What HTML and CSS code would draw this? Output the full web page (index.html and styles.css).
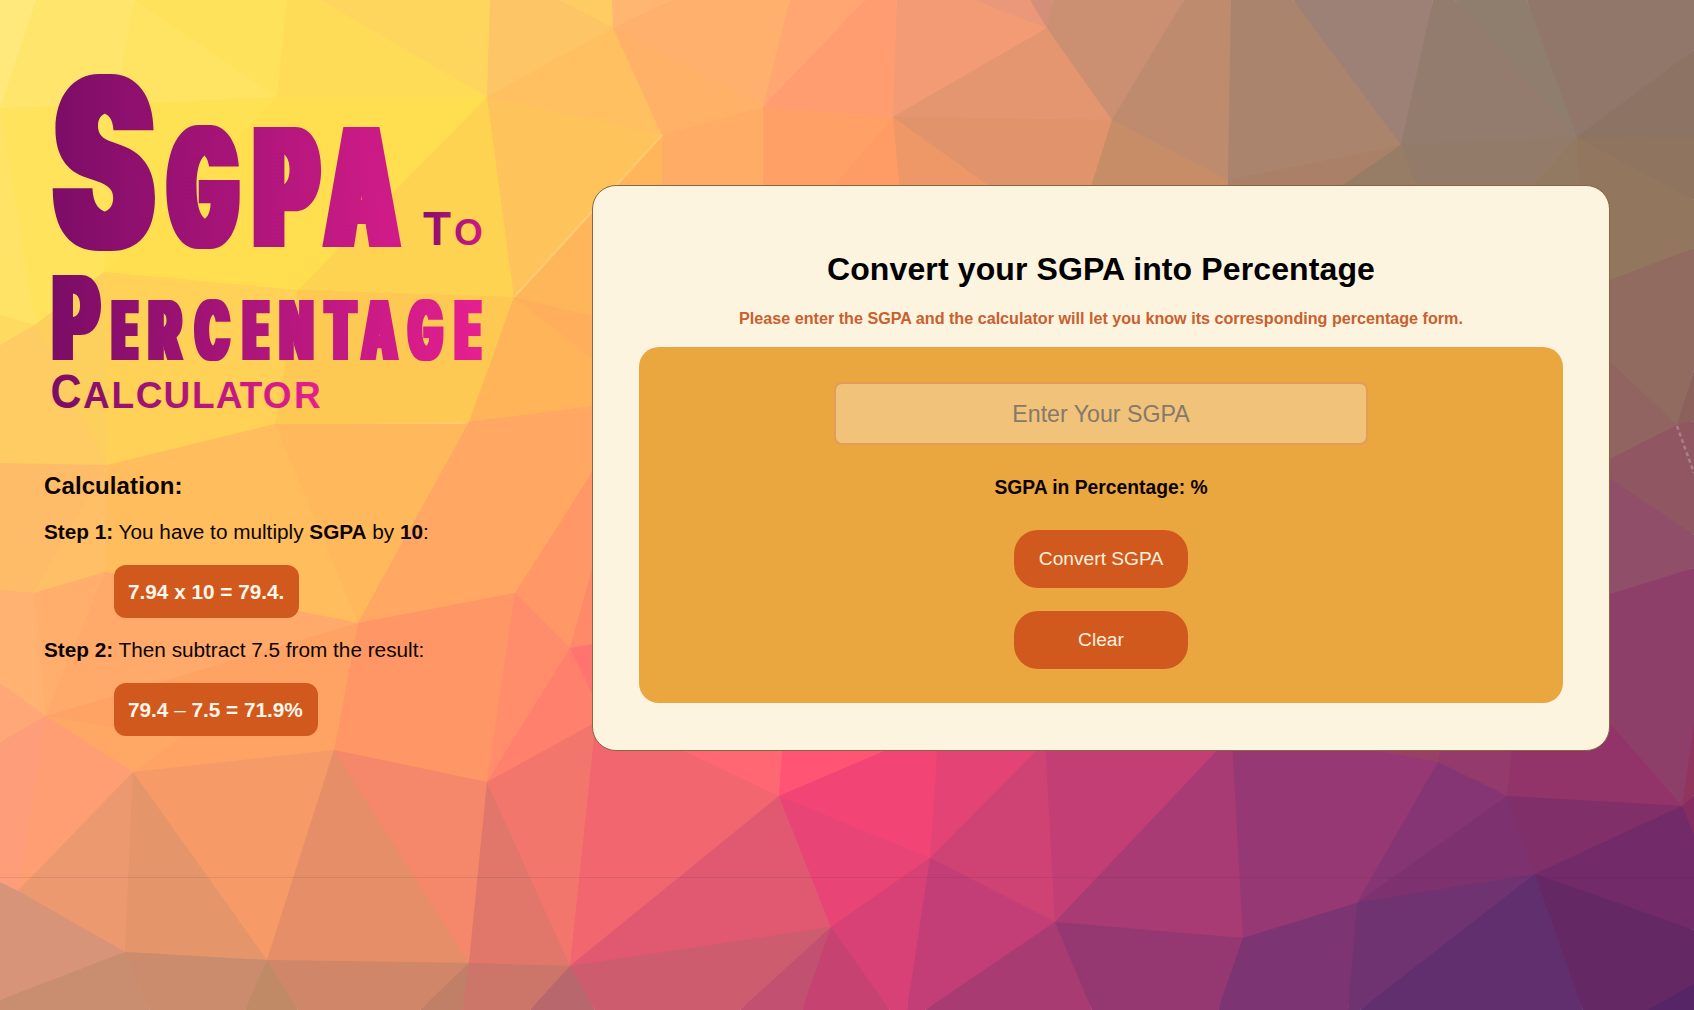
FILE: index.html
```html
<!DOCTYPE html>
<html lang="en">
<head>
<meta charset="utf-8">
<title>SGPA To Percentage Calculator</title>
<link rel="stylesheet" href="styles.css">
</head>
<body>
<svg class="mesh" viewBox="0 0 1694 1010" preserveAspectRatio="none" aria-hidden="true">
  <defs>
    <filter id="spread" filterUnits="userSpaceOnUse" x="-20" y="-20" width="1734" height="1050" color-interpolation-filters="sRGB"><feGaussianBlur stdDeviation="4"/></filter>
  </defs>
  <!-- soft copy underneath closes the hairline gaps between facets -->
  <use href="#facets" filter="url(#spread)"/>
  <g id="facets">
  <!-- upper left -->
  <path d="M0 0H36L0 130z" fill="#ffe97c"/>
  <path d="M36 0H134L115 105 0 108z" fill="#ffe56c"/>
  <path d="M134 0 277 97 115 105z" fill="#ffe363"/>
  <path d="M134 0H287L277 97z" fill="#ffe25c"/>
  <path d="M287 0H320L487 97H277z" fill="#ffdc58"/>
  <path d="M320 0H490L487 97z" fill="#fed65e"/>
  <path d="M490 0H560L613 28 487 97z" fill="#fec566"/>
  <path d="M560 0H612L613 28z" fill="#ffcb63"/>
  <path d="M0 108 115 105 104 272 35 325 0 315z" fill="#ffe35d"/>
  <path d="M0 108 35 325 0 315z" fill="#ffe367"/>
  <path d="M115 105 277 97 104 272z" fill="#ffe253"/>
  <path d="M277 97H487L298 290 104 272z" fill="#ffdf4f"/>
  <path d="M487 97 514 297 298 290z" fill="#ffd352"/>
  <path d="M104 272 298 290 275 424 107 465z" fill="#ffd156"/>
  <path d="M35 325 104 272 107 465z" fill="#fdcf5c"/>
  <path d="M0 315 35 325 0 345z" fill="#ffda60"/>
  <path d="M0 345 35 325 107 465H0z" fill="#ffcb63"/>
  <path d="M298 290 514 297 469 422 275 424z" fill="#fec952"/>
  <path d="M487 97 613 28 662 135 514 297z" fill="#ffc35c"/>
  <path d="M487 97 613 28 662 135z" fill="#ffc061"/>
  <path d="M0 463 107 465 34 593 0 590z" fill="#ffbc68"/>
  <path d="M107 465 105 572 34 593z" fill="#ffbf66"/>
  <path d="M107 465 275 424 358 623 105 572z" fill="#ffbd5d"/>
  <path d="M275 424H469L358 623z" fill="#ffb95c"/>
  <path d="M514 297 469 422 600 405V315z" fill="#ffb459"/>
  <path d="M514 297 600 318V365z" fill="#ffae5c"/>
  <path d="M469 422 600 405V460L515 593 358 623z" fill="#ffa763"/>
  <path d="M515 593 600 460V560L570 648z" fill="#ff9766"/>
  <path d="M570 648 600 540V643z" fill="#ff8a69"/>
  <path d="M358 623 515 593 487 782 334 750z" fill="#ff9666"/>
  <path d="M515 593 570 648 487 782z" fill="#ff8c6a"/>
  <path d="M570 648 600 643V722L487 782z" fill="#ff806c"/>
  <path d="M570 648 600 643V710z" fill="#ff746f"/>
  <path d="M0 590 34 593 46 716 0 683z" fill="#ffb271"/>
  <path d="M34 593 105 572 46 716z" fill="#ffae6c"/>
  <path d="M105 572 358 623 46 716z" fill="#ffa96b"/>
  <path d="M358 623 334 750 133 772 46 716z" fill="#ffa365"/>
  <path d="M46 716 180 738 133 772z" fill="#ffa866"/>
  <path d="M0 683 46 716 0 742z" fill="#ffa777"/>
  <path d="M0 742 46 716 18 891 0 882z" fill="#fd9d7a"/>
  <path d="M46 716 133 772 18 891z" fill="#ff9e72"/>
  <!-- lower left -->
  <path d="M133 772 18 891 125 952z" fill="#ec9970"/>
  <path d="M133 772 125 952 267 960z" fill="#e49569"/>
  <path d="M133 772 334 750 267 960z" fill="#f69b68"/>
  <path d="M334 750 267 960 469 963z" fill="#e58e67"/>
  <path d="M334 750 487 782 469 963z" fill="#f5876a"/>
  <path d="M487 782 469 963 570 966z" fill="#e0776a"/>
  <path d="M487 782 596 722 570 966z" fill="#f3766c"/>
  <path d="M596 720 676 745 779 796 570 966z" fill="#f1666f"/>
  <path d="M779 796 570 966 831 927z" fill="#e15871"/>
  <path d="M0 882 18 891 125 952 0 1000z" fill="#d79478"/>
  <path d="M0 1000 125 952 150 1010H0z" fill="#c98d6f"/>
  <path d="M125 952 267 960 245 1010H150z" fill="#cb8c6d"/>
  <path d="M267 960 245 1010H298z" fill="#bf8a65"/>
  <path d="M267 960 469 963 420 1010H298z" fill="#d08769"/>
  <path d="M469 963 420 1010H462z" fill="#bf8067"/>
  <path d="M469 963 570 966 530 1010H462z" fill="#cc7569"/>
  <path d="M570 966 530 1010H595z" fill="#b8686c"/>
  <path d="M570 966 831 927 740 1010H595z" fill="#ce5c6f"/>
  <path d="M831 927 740 1010H802z" fill="#c25071"/>
  <path d="M831 927 802 1010H890z" fill="#c64271"/>
  <!-- lower middle -->
  <path d="M660 740H783L779 796z" fill="#ff6873"/>
  <path d="M783 740H910L779 796z" fill="#ff5474"/>
  <path d="M779 796 910 740H938L930 858z" fill="#f34575"/>
  <path d="M779 796 930 858 831 927z" fill="#e84476"/>
  <path d="M938 740H1047L930 858z" fill="#e34475"/>
  <path d="M1047 740 1055 922 930 858z" fill="#cf4274"/>
  <path d="M930 858 831 927 890 1010H907z" fill="#d84176"/>
  <path d="M930 858 1055 922 925 1010H907z" fill="#c33e76"/>
  <path d="M1045 740H1227L1055 922z" fill="#c43e76"/>
  <path d="M1227 740H1232L1243 938 1055 922z" fill="#a83b73"/>
  <path d="M1055 922 925 1010H1092z" fill="#a83b72"/>
  <path d="M1055 922 1243 938 1218 1010H1092z" fill="#953872"/>
  <!-- lower right -->
  <path d="M1232 740H1350L1438 762 1357 903 1243 938z" fill="#963874"/>
  <path d="M1320 740H1444L1438 762z" fill="#994068"/>
  <path d="M1443 740H1513L1507 796 1438 762z" fill="#943a6c"/>
  <path d="M1438 762 1357 903 1507 796z" fill="#853573"/>
  <path d="M1357 903 1507 796 1535 874z" fill="#7d326f"/>
  <path d="M1513 740 1600 700 1682 806 1507 796z" fill="#92336a"/>
  <path d="M1507 796 1682 806 1535 874z" fill="#802f68"/>
  <path d="M1535 874 1682 806 1694 830V930z" fill="#732a68"/>
  <path d="M1682 806 1694 795V835z" fill="#852c60"/>
  <path d="M1357 903 1535 874 1360 1010H1348z" fill="#6e3370"/>
  <path d="M1243 938 1357 903 1348 1010H1218z" fill="#7c3472"/>
  <path d="M1535 874 1360 1010H1583z" fill="#612e6e"/>
  <path d="M1535 874 1694 930V1010H1583z" fill="#642965"/>
  <path d="M1648 1010 1694 984V1010z" fill="#552565"/>
  <path d="M1600 712V597L1694 568V795L1682 806z" fill="#8e3f69"/>
  <path d="M1694 725V795L1682 806z" fill="#91355f"/>
  <path d="M1600 468 1694 535V568L1600 597z" fill="#904e68"/>
  <path d="M1600 463 1677 425 1694 421V535L1600 472z" fill="#905662"/>
  <path d="M1600 350 1677 425 1600 464z" fill="#916462"/>
  <path d="M1600 283 1694 248V370L1677 425 1600 352z" fill="#916b60"/>
  <path d="M1694 370 1677 425 1694 421z" fill="#8c615c"/>
  <path d="M1577 137 1694 200V248L1600 284 1500 190z" fill="#92765e"/>
  <!-- upper middle and right -->
  <path d="M612 0H672L613 28z" fill="#ffb670"/>
  <path d="M672 0H790L763 107 613 28z" fill="#ffb06c"/>
  <path d="M613 28 763 107 662 135z" fill="#ffb267"/>
  <path d="M790 0H865L763 107z" fill="#ffa672"/>
  <path d="M865 0H897L893 117 763 107z" fill="#ff9d71"/>
  <path d="M897 0H980L1047 28 893 117z" fill="#f29b74"/>
  <path d="M975 0H1030L1047 28z" fill="#eb9779"/>
  <path d="M1030 0H1053L1047 28z" fill="#d58f78"/>
  <path d="M1047 28 893 117 1112 120z" fill="#e39670"/>
  <path d="M1053 0H1184L1112 120 1047 28z" fill="#cb8f72"/>
  <path d="M1184 0H1231L1228 180 1112 120z" fill="#be8b6f"/>
  <path d="M1231 0H1293L1401 145 1228 180z" fill="#ab846e"/>
  <path d="M1293 0H1433L1401 145z" fill="#9d8176"/>
  <path d="M1433 0H1455L1577 137 1401 145z" fill="#937b6e"/>
  <path d="M1455 0H1527L1577 137z" fill="#8f7d6e"/>
  <path d="M1527 0H1694V50L1577 137z" fill="#90776a"/>
  <path d="M1694 50V138L1577 137z" fill="#8d7364"/>
  <path d="M1577 137 1694 138V200z" fill="#8f745f"/>
  <path d="M662 135 514 297 600 318 663 190z" fill="#ffb65b"/>
  <path d="M662 135 763 107V190H662z" fill="#ffad66"/>
  <path d="M763 107 893 117 830 190H763z" fill="#ffa166"/>
  <path d="M893 117 830 190H900z" fill="#ff9b64"/>
  <path d="M893 117 900 190H995z" fill="#ee9868"/>
  <path d="M893 117 1112 120 1090 190H995z" fill="#e1936b"/>
  <path d="M1112 120 1228 180V190H1090z" fill="#c78d67"/>
  <path d="M1228 180 1401 145 1335 190H1228z" fill="#ab8068"/>
  <path d="M1401 145 1335 190H1418z" fill="#987d66"/>
  <path d="M1401 145 1577 137 1530 190H1418z" fill="#937b69"/>
  <path d="M1577 137 1530 190H1580z" fill="#927a62"/>
  </g>
  <!-- highlights and seam -->
  <path d="M662 135 514 297" class="glint"/>
  <path d="M1677 426 1694 473" class="glint-dash"/>
  <path d="M0 877.5H1694" class="seam"/>
</svg>

<main class="page">
  <section class="intro">
    <svg class="logo" viewBox="44 60 450 370" role="img">
      <defs>
        <linearGradient id="wide" gradientUnits="userSpaceOnUse" x1="52" y1="0" x2="484" y2="0"><stop offset="0" stop-color="#7a0c66"/><stop offset="1" stop-color="#e61f90"/></linearGradient>
        <linearGradient id="to" gradientUnits="userSpaceOnUse" x1="418" y1="0" x2="500" y2="0"><stop offset="0" stop-color="#800d66"/><stop offset="1" stop-color="#e01e8c"/></linearGradient>
        <linearGradient id="calc" gradientUnits="userSpaceOnUse" x1="52" y1="0" x2="322" y2="0"><stop offset="0" stop-color="#7a0c66"/><stop offset="1" stop-color="#e61f90"/></linearGradient>
        <filter id="fat" x="-10%" y="-10%" width="120%" height="120%" color-interpolation-filters="sRGB"><feMorphology operator="dilate" radius="6 0"/></filter>
        <filter id="bold" x="-10%" y="-10%" width="120%" height="120%" color-interpolation-filters="sRGB"><feMorphology operator="dilate" radius="3 0"/></filter>
      </defs>
      <text class="heavy" fill="url(#wide)" filter="url(#fat)" y="247"><tspan x="54.6" y="249" font-size="237" textLength="98.6" lengthAdjust="spacingAndGlyphs">S</tspan><tspan x="169.3" y="247" font-size="165" textLength="67.7" lengthAdjust="spacingAndGlyphs">G</tspan><tspan x="255.2" font-size="165" textLength="62.3" lengthAdjust="spacingAndGlyphs">P</tspan><tspan x="326.2" font-size="165" textLength="71.1" lengthAdjust="spacingAndGlyphs">A</tspan></text>
      <text class="light" fill="url(#to)" y="245"><tspan x="423" font-size="48" textLength="28" lengthAdjust="spacingAndGlyphs">T</tspan><tspan x="454" font-size="37">O</tspan></text>
      <text class="heavy" fill="url(#wide)" filter="url(#bold)" y="360" font-size="82.5"><tspan x="52.2" font-size="117" textLength="47.6" lengthAdjust="spacingAndGlyphs">P</tspan><tspan x="112.4" textLength="24.9" lengthAdjust="spacingAndGlyphs">E</tspan><tspan x="149" textLength="32.3" lengthAdjust="spacingAndGlyphs">R</tspan><tspan x="195.6" textLength="33.6" lengthAdjust="spacingAndGlyphs">C</tspan><tspan x="243.4" textLength="24.9" lengthAdjust="spacingAndGlyphs">E</tspan><tspan x="280.3" textLength="32.4" lengthAdjust="spacingAndGlyphs">N</tspan><tspan x="325.1" textLength="31.1" lengthAdjust="spacingAndGlyphs">T</tspan><tspan x="362.1" textLength="35" lengthAdjust="spacingAndGlyphs">A</tspan><tspan x="408.7" textLength="33.3" lengthAdjust="spacingAndGlyphs">G</tspan><tspan x="455.4" textLength="24.9" lengthAdjust="spacingAndGlyphs">E</tspan></text>
      <text class="light" fill="url(#calc)" y="408"><tspan x="50.5" font-size="48" textLength="31" lengthAdjust="spacingAndGlyphs">C</tspan><tspan font-size="37" x="83 111.5 135.7 163.5 192 215.7 239.8 262.8 294">ALCULATOR</tspan></text>
    </svg>

    <h2 class="steps-title">Calculation:</h2>
    <p class="step"><b>Step 1:</b> You have to multiply <b>SGPA</b> by <b>10</b>:</p>
    <p class="formula">7.94 x 10 = 79.4.</p>
    <p class="step"><b>Step 2:</b> Then subtract 7.5 from the result:</p>
    <p class="formula">79.4 <span class="minus">–</span> 7.5 = 71.9%</p>
  </section>

  <section class="card">
    <h1 class="card-title">Convert your SGPA into Percentage</h1>
    <p class="card-note">Please enter the SGPA and the calculator will let you know its corresponding percentage form.</p>
    <form class="panel">
      <input class="field" type="text" placeholder="Enter Your SGPA">
      <p class="result">SGPA in Percentage: %</p>
      <button class="btn" type="button">Convert SGPA</button>
      <button class="btn" type="button">Clear</button>
    </form>
  </section>
</main>
</body>
</html>
```
FILE: styles.css
```css
* {
  box-sizing: border-box;
}

body {
  margin: 0;
  height: 1010px;
  overflow: hidden;
  color: #0c0402;
  font-family: "Liberation Sans", Arial, sans-serif;
}

h1, h2, p {
  margin: 0;
}

/* Backdrop behind the whole page */
.mesh {
  position: absolute;
  inset: 0;
  z-index: -1;
  width: 100%;
  height: 100%;
}

.glint {
  fill: none;
  stroke: #ffca70;
  stroke-width: 2.5;
}

.glint-dash {
  fill: none;
  stroke: #c09aa6;
  stroke-opacity: .6;
  stroke-width: 2.5;
  stroke-dasharray: 4 3;
}

.seam {
  stroke: #50283c;
  stroke-opacity: .12;
}

.page {
  display: flex;
  align-items: flex-start;
}

/* Left column */
.intro {
  width: 592px;
  padding: 60px 0 0 44px;
}

.logo {
  display: block;
  width: 450px;
  height: 370px;
  overflow: visible;
}

.heavy {
  font-family: Inter, sans-serif;
  font-weight: 900;
}

.light {
  font-weight: bold;
}

.steps-title {
  margin-top: 42px;
  font-size: 24px;
  letter-spacing: .1px;
  line-height: 28px;
}

.step {
  margin-top: 19px;
  font-size: 20.75px;
  line-height: 26px;
}

.formula {
  width: fit-content;
  height: 53px;
  margin: 20px 0 0 70px;
  padding: 0 15px 0 14px;
  border-radius: 12px;
  background: #d1591d;
  color: #fff5e8;
  font-size: 20.75px;
  font-weight: bold;
  line-height: 53px;
}

.minus {
  font-weight: normal;
}

/* Converter card */
.card {
  width: 1018px;
  height: 566px;
  margin-top: 185px;
  padding: 65px 46px 46px;
  border: 1px solid #8b6440;
  border-radius: 24px;
  background: #fdf4df;
  text-align: center;
}

.card-title {
  font-size: 32px;
  letter-spacing: .12px;
  line-height: 37px;
  color: #000;
}

.card-note {
  margin: 20px 0 19px;
  color: #c9602f;
  font-size: 16.15px;
  font-weight: bold;
  line-height: 20px;
}

.panel {
  display: flex;
  flex-direction: column;
  align-items: center;
  height: 356px;
  padding-top: 35px;
  border-radius: 20px;
  background: #eaa63f;
}

.field {
  width: 534px;
  height: 63px;
  padding-top: 3px;
  border: 2px solid #e29d5b;
  border-radius: 8px;
  background: #f1c27a;
  font: 23.2px "Liberation Sans", Arial, sans-serif;
  text-align: center;
}

.field::placeholder {
  color: #85796a;
}

.result {
  margin: 31px 0 30px;
  font-size: 19.3px;
  font-weight: bold;
  line-height: 24px;
}

.btn {
  width: 174px;
  height: 58px;
  margin-bottom: 23px;
  border: 0;
  border-radius: 24px;
  background: #d1591d;
  color: #fdf0dd;
  font: 19.2px "Liberation Sans", Arial, sans-serif;
}
```
